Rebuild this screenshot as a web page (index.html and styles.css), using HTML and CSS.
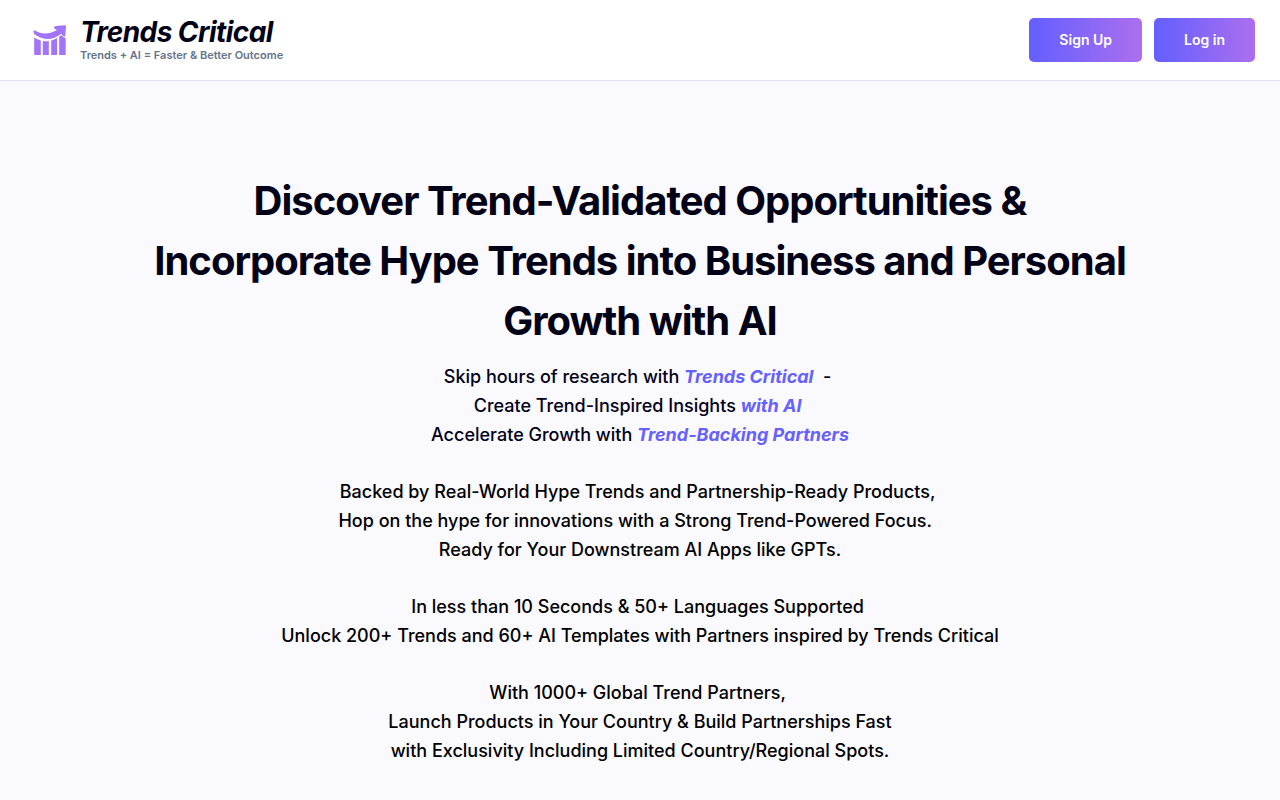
FILE: index.html
```html
<!DOCTYPE html>
<html lang="en">
<head>
<meta charset="utf-8">
<title>Trends Critical</title>
<link rel="stylesheet" href="styles.css">
</head>
<body>
<header class="site-header">
  <a class="brand" href="#">
    <svg class="brand-mark" viewBox="0 0 36 36" aria-hidden="true">
      <path d="M2.200 15.500Q5 17.500 8.800 18.500V33H3.200q-1 0-1-1zM10.800 19q3 .5 6 0v14h-6zM19.200 18.500q3-.9 5.800-2.500v17h-5.800zM27.200 14.500l2-1.300 3 2.500 1.500.5V32q0 1-1 1h-5.500z"/>
      <path d="M1.500 9Q1.800 7.800 3.200 8.700 13 14.500 25 8.300L22.200 6.500Q21.500 4.500 23.500 4L33 3.200Q34.200 3.200 34 4.500L33.300 13.500Q32.800 15.500 31.200 14.300L29.200 11.800Q16 22 2.500 12.200 1.300 10.800 1.500 9z"/>
    </svg>
    <span class="brand-text">
      <span class="brand-name">Trends Critical</span>
      <span class="brand-tagline">Trends + AI = Faster &amp; Better Outcome</span>
    </span>
  </a>
  <nav class="actions">
    <a class="button" href="#">Sign Up</a>
    <a class="button" href="#">Log in</a>
  </nav>
</header>
<main class="hero">
  <h1 class="title">Discover Trend-Validated Opportunities &amp; Incorporate Hype Trends into Business and Personal Growth with AI</h1>
  <p class="copy copy-lead">Skip hours of research with <em class="accent">Trends Critical</em>&nbsp; -&nbsp;<br>Create Trend-Inspired Insights <em class="accent">with AI</em>&nbsp;<br>Accelerate Growth with <em class="accent">Trend-Backing Partners</em></p>
  <p class="copy">Backed by Real-World Hype Trends and Partnership-Ready Products,&nbsp;<br>Hop on the hype for innovations with a Strong Trend-Powered Focus.&nbsp;&nbsp;<br>Ready for Your Downstream AI Apps like GPTs.</p>
  <p class="copy">In less than 10 Seconds &amp; 50+ Languages Supported&nbsp;<br>Unlock 200+ Trends and 60+ AI Templates with Partners inspired by Trends Critical</p>
  <p class="copy">With 1000+ Global Trend Partners,&nbsp;<br>Launch Products in Your Country &amp; Build Partnerships Fast<br>with Exclusivity Including Limited Country/Regional Spots.</p>
</main>
</body>
</html>
```
FILE: styles.css
```css
* { box-sizing: border-box; }
body { margin: 0; background: #f9f9fe; color: #020017; font-family: Inter, "Liberation Sans", sans-serif; }
.site-header { display: flex; align-items: center; justify-content: space-between; min-height: 81px; padding: 0 25px 0 32px; background: #fff; border-bottom: 1px solid #e4e0f8; }
.brand { display: flex; align-items: center; gap: 12px; color: inherit; text-decoration: none; }
.brand-mark { width: 36px; height: 36px; fill: #a274f9; }
.brand-text { display: flex; flex-direction: column; padding-bottom: 2px; }
.brand-name { font-size: 28px; line-height: 32px; font-weight: 700; font-style: italic; letter-spacing: -0.02em; }
.brand-tagline { font-size: 11px; line-height: 14px; font-weight: 600; color: #64748b; }
.actions { display: flex; gap: 12px; }
.button { padding: 0 30px; border-radius: 5px; background: linear-gradient(90deg, #635fff, #ab6fee); color: #fff; font-size: 14px; line-height: 44px; font-weight: 600; text-decoration: none; }
.hero { padding: 90px 32px 32px; text-align: center; }
.title { max-width: 980px; margin: 0 auto 11px; font-size: 40px; line-height: 60px; font-weight: 700; letter-spacing: -1px; }
.copy { margin: 0 0 28px; font-size: 18px; line-height: 29px; font-weight: 500; color: #000; }
.copy-lead { color: #020017; }
.accent { color: #6660ff; font-weight: 700; }
```
